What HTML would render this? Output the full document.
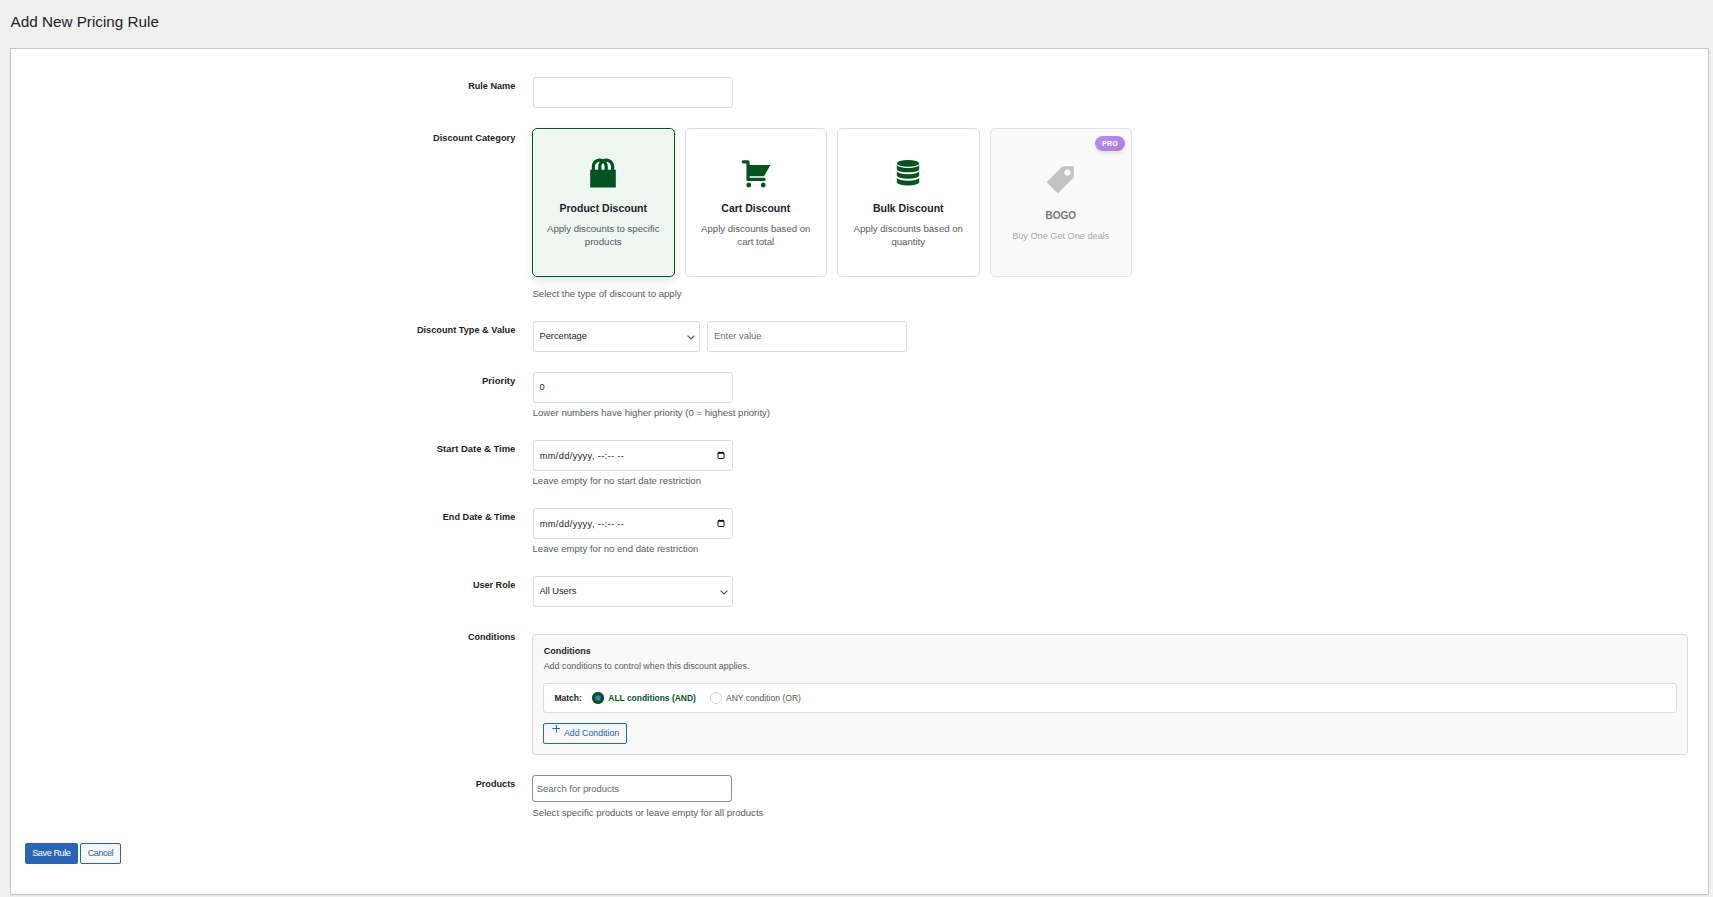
<!DOCTYPE html>
<html><head><meta charset="utf-8"><title>Add New Pricing Rule</title>
<style>
html,body{margin:0;padding:0;}
body{width:1713px;height:897px;overflow:hidden;position:relative;background:#f0f0f1;font-family:"Liberation Sans", sans-serif;}
.t{position:absolute;white-space:nowrap;}
.b{position:absolute;box-sizing:border-box;}
svg.b{overflow:visible;}
</style></head><body>
<div class="t" style="left:10.50px;top:12px;font-size:15.27px;line-height:20px;font-weight:400;color:#1d2327;">Add New Pricing Rule</div>
<div class="b" style="left:10px;top:48px;width:1699px;height:847px;border:1px solid #c3c4c7;background:#fff;box-shadow:0 1px 1px rgba(0,0,0,.04);"></div>
<div class="t" style="left:115.30px;width:400px;text-align:right;top:76px;font-size:9.15px;line-height:20px;font-weight:700;color:#1d2327;">Rule Name</div>
<div class="t" style="left:115.30px;width:400px;text-align:right;top:128px;font-size:9.26px;line-height:20px;font-weight:700;color:#1d2327;">Discount Category</div>
<div class="t" style="left:115.30px;width:400px;text-align:right;top:320px;font-size:9.2px;line-height:20px;font-weight:700;color:#1d2327;">Discount Type &amp; Value</div>
<div class="t" style="left:115.30px;width:400px;text-align:right;top:371px;font-size:9.5px;line-height:20px;font-weight:700;color:#1d2327;">Priority</div>
<div class="t" style="left:115.30px;width:400px;text-align:right;top:439px;font-size:9.45px;line-height:20px;font-weight:700;color:#1d2327;">Start Date &amp; Time</div>
<div class="t" style="left:115.30px;width:400px;text-align:right;top:507px;font-size:9.16px;line-height:20px;font-weight:700;color:#1d2327;">End Date &amp; Time</div>
<div class="t" style="left:115.30px;width:400px;text-align:right;top:575px;font-size:9.08px;line-height:20px;font-weight:700;color:#1d2327;">User Role</div>
<div class="t" style="left:115.30px;width:400px;text-align:right;top:627px;font-size:9.08px;line-height:20px;font-weight:700;color:#1d2327;">Conditions</div>
<div class="t" style="left:115.30px;width:400px;text-align:right;top:774px;font-size:9.14px;line-height:20px;font-weight:700;color:#1d2327;">Products</div>
<div class="b" style="left:533px;top:77px;width:200px;height:31px;border:1px solid #dcdcde;border-radius:3px;background:#fff;"></div>
<div class="b" style="left:532.0px;top:128px;width:142.5px;height:149px;border:1px solid #03521f;border-radius:5px;background:#edf6f0;box-shadow:inset 0 0 0 1px #fff,0 4px 10px rgba(0,50,20,.11);"></div>
<svg class="b" style="left:587.25px;top:157.30px" width="32" height="32" viewBox="0 0 20 20" fill="#03521f"><path d="M17 8h1v11H2V8h1V6c0-2.76 2.24-5 5-5 .71 0 1.39.15 2 .42.61-.27 1.29-.42 2-.42 2.76 0 5 2.24 5 5v2zM5 6v2h2V6c0-1.13.39-2.16 1.02-3H8C6.35 3 5 4.35 5 6zm10 2V6c0-1.65-1.35-3-3-3h-.02c.63.84 1.02 1.87 1.02 3v2h2zm-5-4.22C9.39 4.33 9 5.12 9 6v2h2V6c0-.88-.39-1.67-1-2.22z"/></svg>
<div class="t" style="left:532.00px;width:142.5px;text-align:center;top:198px;font-size:10.5px;line-height:20px;font-weight:700;color:#1d2327;">Product Discount</div>
<div class="t" style="left:532.00px;width:142.5px;text-align:center;top:219px;font-size:9.61px;line-height:20px;font-weight:400;color:#565c62;">Apply discounts to specific</div>
<div class="t" style="left:532.00px;width:142.5px;text-align:center;top:232px;font-size:9.61px;line-height:20px;font-weight:400;color:#565c62;">products</div>
<div class="b" style="left:684.5px;top:128px;width:142.5px;height:149px;border:1px solid #dcdcde;border-radius:5px;background:#fff;"></div>
<svg class="b" style="left:739.75px;top:157.30px" width="32" height="32" viewBox="0 0 20 20" fill="#03521f"><path d="M6 13h9c.55 0 1 .45 1 1s-.45 1-1 1H5c-.55 0-1-.45-1-1V4H2c-.55 0-1-.45-1-1s.45-1 1-1h3c.55 0 1 .45 1 1v2h13l-4 7H6v1zm-.5 3c.83 0 1.5.67 1.5 1.5S6.33 19 5.5 19 4 18.33 4 17.5 4.67 16 5.5 16zm9 0c.83 0 1.5.67 1.5 1.5s-.67 1.5-1.5 1.5-1.5-.67-1.5-1.5.67-1.5 1.5-1.5z"/></svg>
<div class="t" style="left:684.50px;width:142.5px;text-align:center;top:198px;font-size:10.5px;line-height:20px;font-weight:700;color:#1d2327;">Cart Discount</div>
<div class="t" style="left:684.50px;width:142.5px;text-align:center;top:219px;font-size:9.61px;line-height:20px;font-weight:400;color:#565c62;">Apply discounts based on</div>
<div class="t" style="left:684.50px;width:142.5px;text-align:center;top:232px;font-size:9.61px;line-height:20px;font-weight:400;color:#565c62;">cart total</div>
<div class="b" style="left:837.0px;top:128px;width:142.5px;height:149px;border:1px solid #dcdcde;border-radius:5px;background:#fff;"></div>
<svg class="b" style="left:892.25px;top:157.30px" width="32" height="32" viewBox="0 0 20 20" fill="#03521f"><ellipse cx="10" cy="4" rx="7" ry="2.1"/><path d="M3 4.9A7 2 0 0 0 17 4.9V7.6A7 2 0 0 1 3 7.6Z"/><path d="M3 8.8A7 2 0 0 0 17 8.8V11.6A7 2 0 0 1 3 11.6Z"/><path d="M3 12.8A7 2 0 0 0 17 12.8V15.8A7 2 0 0 1 3 15.8Z"/></svg>
<div class="t" style="left:837.00px;width:142.5px;text-align:center;top:198px;font-size:10.5px;line-height:20px;font-weight:700;color:#1d2327;">Bulk Discount</div>
<div class="t" style="left:837.00px;width:142.5px;text-align:center;top:219px;font-size:9.61px;line-height:20px;font-weight:400;color:#565c62;">Apply discounts based on</div>
<div class="t" style="left:837.00px;width:142.5px;text-align:center;top:232px;font-size:9.61px;line-height:20px;font-weight:400;color:#565c62;">quantity</div>
<div class="b" style="left:989.5px;top:128px;width:142.5px;height:149px;border:1px solid #e2e2e2;border-radius:5px;background:#fafafa;"></div>
<svg class="b" style="left:1044.75px;top:162.90px" width="32" height="32" viewBox="0 0 20 20" fill="#c3c3c3"><path d="M11 2h7v7L8 19l-7-7zm3 6c1.1 0 2-.9 2-2s-.9-2-2-2-2 .9-2 2 .9 2 2 2z"/></svg>
<div class="t" style="left:989.50px;width:142.5px;text-align:center;top:206px;font-size:10.0px;line-height:20px;font-weight:700;color:#787878;">BOGO</div>
<div class="t" style="left:989.50px;width:142.5px;text-align:center;top:226px;font-size:9.16px;line-height:20px;font-weight:400;color:#a8a8a8;">Buy One Get One deals</div>
<div class="b" style="left:1095px;top:136px;width:30px;height:15px;border-radius:8px;background:linear-gradient(135deg,#a993f0,#b77bd0);box-shadow:0 2px 4px rgba(0,0,0,.12);"></div>
<div class="t" style="left:1095.00px;width:30px;text-align:center;top:134px;font-size:7.0px;line-height:20px;font-weight:700;color:#fff;letter-spacing:.25px;">PRO</div>
<div class="t" style="left:532.40px;top:284px;font-size:9.63px;line-height:20px;font-weight:400;color:#565c62;">Select the type of discount to apply</div>
<div class="b" style="left:533px;top:321px;width:167px;height:31px;border:1px solid #dcdcde;border-radius:3px;background:#fff;"></div>
<div class="t" style="left:539.50px;top:326px;font-size:9.27px;line-height:20px;font-weight:400;color:#1d2327;">Percentage</div>
<svg class="b" style="left:686.5px;top:335px" width="8" height="5" viewBox="0 0 8 5"><path d="M0.6 0.6L4 4L7.4 0.6" fill="none" stroke="#555" stroke-width="1.2"/></svg>
<div class="b" style="left:707px;top:321px;width:200px;height:31px;border:1px solid #dcdcde;border-radius:3px;background:#fff;"></div>
<div class="t" style="left:714.10px;top:326px;font-size:9.37px;line-height:20px;font-weight:400;color:#6b7075;">Enter value</div>
<div class="b" style="left:533px;top:372px;width:200px;height:31px;border:1px solid #dcdcde;border-radius:3px;background:#fff;"></div>
<div class="t" style="left:539.40px;top:377px;font-size:9.3px;line-height:20px;font-weight:400;color:#1d2327;">0</div>
<div class="t" style="left:532.70px;top:403px;font-size:9.57px;line-height:20px;font-weight:400;color:#565c62;">Lower numbers have higher priority (0 = highest priority)</div>
<div class="b" style="left:533px;top:440px;width:200px;height:31px;border:1px solid #dcdcde;border-radius:3px;background:#fff;"></div>
<div class="t" style="left:539.70px;top:446px;font-size:9.3px;line-height:20px;font-weight:400;color:#1d2327;letter-spacing:.33px;">mm/dd/yyyy, --:-- --</div>
<svg class="b" style="left:716.7px;top:450.6px" width="8" height="8" viewBox="0 0 8 8"><rect x="1" y="1.5" width="6" height="6" rx="0.8" fill="none" stroke="#111" stroke-width="1"/><rect x="1" y="1.2" width="6" height="1.6" fill="#111"/><rect x="2" y="0.6" width="0.9" height="1" fill="#111"/><rect x="5.1" y="0.6" width="0.9" height="1" fill="#111"/></svg>
<div class="t" style="left:532.50px;top:471px;font-size:9.57px;line-height:20px;font-weight:400;color:#565c62;">Leave empty for no start date restriction</div>
<div class="b" style="left:533px;top:508px;width:200px;height:31px;border:1px solid #dcdcde;border-radius:3px;background:#fff;"></div>
<div class="t" style="left:539.70px;top:514px;font-size:9.3px;line-height:20px;font-weight:400;color:#1d2327;letter-spacing:.33px;">mm/dd/yyyy, --:-- --</div>
<svg class="b" style="left:716.7px;top:518.6px" width="8" height="8" viewBox="0 0 8 8"><rect x="1" y="1.5" width="6" height="6" rx="0.8" fill="none" stroke="#111" stroke-width="1"/><rect x="1" y="1.2" width="6" height="1.6" fill="#111"/><rect x="2" y="0.6" width="0.9" height="1" fill="#111"/><rect x="5.1" y="0.6" width="0.9" height="1" fill="#111"/></svg>
<div class="t" style="left:532.50px;top:539px;font-size:9.57px;line-height:20px;font-weight:400;color:#565c62;">Leave empty for no end date restriction</div>
<div class="b" style="left:533px;top:576px;width:200px;height:31px;border:1px solid #dcdcde;border-radius:3px;background:#fff;"></div>
<div class="t" style="left:539.40px;top:581px;font-size:9.27px;line-height:20px;font-weight:400;color:#1d2327;">All Users</div>
<svg class="b" style="left:719.6px;top:590px" width="8" height="5" viewBox="0 0 8 5"><path d="M0.6 0.6L4 4L7.4 0.6" fill="none" stroke="#555" stroke-width="1.2"/></svg>
<div class="b" style="left:532px;top:634px;width:1156px;height:121px;border:1px solid #dcdcde;border-radius:4px;background:#f9f9f9;"></div>
<div class="t" style="left:543.70px;top:641px;font-size:9.0px;line-height:20px;font-weight:700;color:#1d2327;">Conditions</div>
<div class="t" style="left:543.70px;top:656px;font-size:8.89px;line-height:20px;font-weight:400;color:#565c62;">Add conditions to control when this discount applies.</div>
<div class="b" style="left:543px;top:683px;width:1134px;height:30px;border:1px solid #dcdcde;border-radius:3px;background:#fff;"></div>
<div class="t" style="left:554.40px;top:688px;font-size:8.5px;line-height:20px;font-weight:700;color:#1d2327;">Match:</div>
<div class="b" style="left:592px;top:692px;width:12px;height:12px;border-radius:50%;background:#4677cc;box-shadow:inset 0 0 0 3.3px #04561f;"></div>
<div class="t" style="left:608.30px;top:688px;font-size:8.45px;line-height:20px;font-weight:700;color:#03521f;">ALL conditions (AND)</div>
<div class="b" style="left:710px;top:692px;width:12px;height:12px;border-radius:50%;background:#fff;border:1px solid #d0d1d3;box-sizing:border-box;"></div>
<div class="t" style="left:726.00px;top:688px;font-size:8.56px;line-height:20px;font-weight:400;color:#50575e;">ANY condition (OR)</div>
<div class="b" style="left:543px;top:723px;width:84px;height:21px;border:1px solid #2a64b4;border-radius:2px;background:#f6f7f7;"></div>
<svg class="b" style="left:552px;top:725px" width="8" height="8" viewBox="0 0 8 8"><path d="M4.5 0V7.5M0.5 3.5H8" stroke="#2a64b4" stroke-width="1"/></svg>
<div class="t" style="left:564.00px;top:723px;font-size:8.8px;line-height:20px;font-weight:400;color:#2a64b4;">Add Condition</div>
<div class="b" style="left:532px;top:775px;width:200px;height:27px;border:1px solid #8c8f94;border-radius:3px;background:#fff;"></div>
<div class="t" style="left:536.80px;top:779px;font-size:9.43px;line-height:20px;font-weight:400;color:#646970;">Search for products</div>
<div class="t" style="left:532.50px;top:803px;font-size:9.55px;line-height:20px;font-weight:400;color:#565c62;">Select specific products or leave empty for all products</div>
<div class="b" style="left:25px;top:843px;width:53px;height:21px;background:#2a64b4;border-radius:2px;"></div>
<div class="t" style="left:32.20px;top:843px;font-size:9.2px;line-height:20px;font-weight:400;color:#fff;letter-spacing:-.45px;">Save Rule</div>
<div class="b" style="left:80px;top:843px;width:41px;height:21px;border:1px solid #2a64b4;border-radius:2px;background:#f6f7f7;"></div>
<div class="t" style="left:87.80px;top:843px;font-size:9.0px;line-height:20px;font-weight:400;color:#2a64b4;letter-spacing:-.45px;">Cancel</div>
</body></html>
